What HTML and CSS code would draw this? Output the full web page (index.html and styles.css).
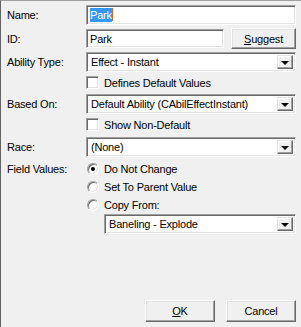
FILE: index.html
```html
<!DOCTYPE html>
<html>

<head>
    <title>New Ability</title>
    <meta name="viewport" content="width=device-width, initial-scale=1.0">
    <link rel="stylesheet" href="styles.css">
</head>

<body>
    <div class="dialog">
        <div class="row row-name">
            <div class="label">Name:</div>
            <div class="edit">
                <span class="selected">Park</span><span class="caret"></span>
            </div>
        </div>

        <div class="row row-id">
            <div class="label">ID:</div>
            <div class="edit edit-id">Park</div>
            <button class="btn btn-suggest"><u>S</u>uggest</button>
        </div>

        <div class="row row-ability">
            <div class="label">Ability Type:</div>
            <div class="combo">
                <span class="combo-text">Effect - Instant</span>
                <span class="combo-arrow"></span>
            </div>
        </div>

        <div class="row row-check">
            <div class="label"></div>
            <span class="checkbox"></span>
            <span class="check-text">Defines Default Values</span>
        </div>

        <div class="row row-based">
            <div class="label">Based On:</div>
            <div class="combo">
                <span class="combo-text">Default Ability (CAbilEffectInstant)</span>
                <span class="combo-arrow"></span>
            </div>
        </div>

        <div class="row row-check row-check2">
            <div class="label"></div>
            <span class="checkbox"></span>
            <span class="check-text">Show Non-Default</span>
        </div>

        <div class="row row-race">
            <div class="label">Race:</div>
            <div class="combo">
                <span class="combo-text">(None)</span>
                <span class="combo-arrow"></span>
            </div>
        </div>

        <div class="row row-radio row-radio-first">
            <div class="label">Field Values:</div>
            <span class="radio checked"></span>
            <span class="check-text">Do Not Change</span>
        </div>
        <div class="row row-radio">
            <div class="label"></div>
            <span class="radio"></span>
            <span class="check-text">Set To Parent Value</span>
        </div>
        <div class="row row-radio">
            <div class="label"></div>
            <span class="radio"></span>
            <span class="check-text">Copy From:</span>
        </div>

        <div class="row row-copy">
            <div class="combo">
                <span class="combo-text">Baneling - Explode</span>
                <span class="combo-arrow"></span>
            </div>
        </div>

        <!-- dialog buttons -->
        <div class="footer">
            <button class="btn btn-ok"><u>O</u>K</button>
            <button class="btn btn-cancel">Cancel</button>
        </div>
    </div>
</body>

</html>
```

FILE: styles.css
```css
:root {
    --face: #f0f0f0;
    --shadow: #a0a0a0;
    --dark: #696969;
    --light: #e3e3e3;
}

html,
body {
    margin: 0;
    padding: 0;
}

body {
    width: 301px;
    height: 327px;
    background: var(--face);
    font-family: 'Liberation Sans', Arial, sans-serif;
    font-size: 11px;
    letter-spacing: -0.2px;
    color: #000;
    overflow: hidden;
}

.dialog {
    height: 327px;
    box-sizing: border-box;
    border-left: 1px solid #646464;
    border-top: 1px solid #a0a0a0;
    padding: 3px 5px 5px 6px;
    display: flex;
    flex-direction: column;
}

.row {
    display: flex;
    align-items: center;
}

.label {
    width: 79px;
    flex-shrink: 0;
}

/* sunken fields */
.edit,
.combo,
.checkbox,
.radio {
    background: #fff;
    box-sizing: border-box;
    border: 1px solid;
    border-color: var(--shadow) #fff #fff var(--shadow);
    box-shadow: inset 1px 1px var(--dark), inset -1px -1px var(--light);
}

.edit {
    flex: 1;
    height: 20px;
    padding: 0 3px;
    display: flex;
    align-items: center;
}

.selected {
    background: #3399ff;
    color: #fff;
    padding: 1px 0;
}

.caret {
    width: 1px;
    height: 13px;
    background: #d06a1a;
}

.row-name {
    height: 21px;
}

.row-id {
    margin-top: 3px;
    height: 21px;
}

.edit-id {
    flex: 0 0 138px;
    height: 19px;
}

.btn {
    font-family: inherit;
    font-size: 11px;
    letter-spacing: -0.2px;
    color: #000;
    background: var(--face);
    box-sizing: border-box;
    border: 1px solid;
    border-color: #fff #696969 #696969 #fff;
    box-shadow: inset -1px -1px var(--shadow), inset 1px 1px var(--light);
    padding: 0;
    cursor: pointer;
}

.btn-suggest {
    margin-left: 7px;
    width: 66px;
    height: 21px;
}

.combo {
    flex: 1;
    height: 20px;
    display: flex;
    align-items: center;
    padding: 2px;
}

.combo-text {
    flex: 1;
    padding-left: 2px;
    white-space: nowrap;
    overflow: hidden;
}

.combo-arrow {
    width: 16px;
    align-self: stretch;
    background: var(--face);
    box-sizing: border-box;
    border: 1px solid;
    border-color: var(--light) #696969 #696969 var(--light);
    box-shadow: inset -1px -1px var(--shadow), inset 1px 1px #fff;
    display: flex;
    align-items: center;
    justify-content: center;
}

.combo-arrow::after {
    content: "";
    border-left: 4px solid transparent;
    border-right: 4px solid transparent;
    border-top: 4px solid #000;
    margin-top: 1px;
}

.row-ability {
    margin-top: 3px;
}

.row-check {
    margin-top: 4px;
    height: 13px;
}

.checkbox {
    width: 13px;
    height: 13px;
    flex-shrink: 0;
}

.check-text {
    margin-left: 5px;
}

.row-based {
    margin-top: 5px;
}

.row-check2 {
    margin-top: 4px;
}

.row-race {
    margin-top: 6px;
}

.row-radio {
    height: 18px;
}

.row-radio-first {
    margin-top: 3px;
}

.radio {
    width: 12px;
    height: 12px;
    margin-left: 1px;
    border-radius: 50%;
    flex-shrink: 0;
    display: flex;
    align-items: center;
    justify-content: center;
}

.radio.checked::after {
    content: "";
    width: 4px;
    height: 4px;
    border-radius: 50%;
    background: #000;
}

.row-radio .check-text {
    margin-left: 5px;
}

.row-copy {
    padding-left: 97px;
}

.footer {
    margin-top: auto;
    display: flex;
    justify-content: flex-end;
    gap: 11px;
    padding-right: 0;
}

.btn-ok,
.btn-cancel {
    width: 70px;
    height: 22px;
}
```
